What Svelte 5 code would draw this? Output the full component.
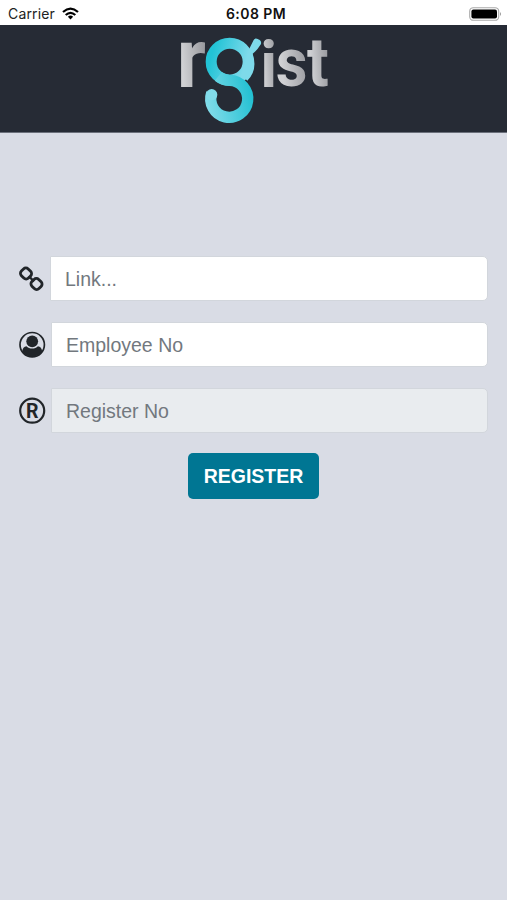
<script lang="ts">
	let link = '';
	let employeeNo = '';
	let registerNo = '';
</script>

<div class="screen">
	<div class="status">
		<div class="carrier">
			<span>Carrier</span>
			<svg width="17" height="13" viewBox="0 0 17 13">
				<g fill="none" stroke="#000" stroke-width="2.2">
					<path d="M1 5Q8.500-1.800 16 5" />
					<path d="M3.700 8Q8.500 3.600 13.300 8" />
				</g>
				<path d="M5.900 9.700Q8.500 7.500 11.100 9.700L8.500 12.400Z" />
			</svg>
		</div>
		<span class="time">6:08 PM</span>
		<svg class="battery" width="33" height="14" viewBox="0 0 33 14">
			<rect x="0.700" y="0.700" width="29" height="12.600" rx="3.600" fill="#fff" stroke="#aaa" stroke-width="1.100" />
			<rect x="2.400" y="2.400" width="25.600" height="9.200" rx="2" />
			<path d="M31 5Q33 7 31 9Z" fill="#999" />
		</svg>
	</div>

	<header>
		<svg class="logo" width="170" height="107" viewBox="0 0 510 321">
			<defs>
				<linearGradient id="silver" x1="0" x2="1" y1="0.3" y2="0">
					<stop offset="0.1" stop-color="#d0d1d4" />
					<stop offset="1" stop-color="#8f9095" />
				</linearGradient>
				<linearGradient id="ring" x1="0" x2="1" y1="0" y2="0.3">
					<stop offset="0.1" stop-color="#22c3d6" />
					<stop offset="1" stop-color="#7edaea" />
				</linearGradient>
				<linearGradient id="hook" gradientUnits="userSpaceOnUse" x1="105" x2="250" y1="225" y2="190">
					<stop offset="0" stop-color="#82dcea" />
					<stop offset="1" stop-color="#1fbfd1" />
				</linearGradient>
			</defs>
			<g fill="url(#silver)" class="letters">
				<text transform="translate(20 182) scale(0.950 1)" font-size="252">r</text>
				<text transform="translate(271 182) scale(0.980 1)" font-size="196">i</text>
				<text transform="translate(317 181) scale(0.900 1)" font-size="206">s</text>
				<text transform="translate(411 181) scale(0.930 1)" font-size="208">t</text>
			</g>
			<path
				d="M236 72L251 42Q254 36 261 38L268 41Q275 45 273 54Q261 74 248 83Q264 132 232 164L214 146Z"
				fill="#7edaea"
			/>
			<circle cx="179" cy="107" r="55.500" fill="none" stroke="url(#ring)" stroke-width="33" />
			<path
				d="M145 151Q160 163 179 163A55.500 55.500 0 1 1 125 201"
				fill="none"
				stroke="url(#hook)"
				stroke-width="34"
			/>
			<circle cx="125" cy="206" r="17" fill="#82dcea" />
		</svg>
	</header>

	<form on:submit|preventDefault>
		<label class="row">
			<svg width="26" height="26" viewBox="0 0 26 26">
				<g fill="none" stroke="#212529" stroke-width="2.800">
					<rect x="-5" y="-4.800" width="10" height="9.600" rx="3.300" transform="translate(7 7.500) rotate(45)" />
					<rect x="-5" y="-4.800" width="10" height="9.600" rx="3.300" transform="translate(17.500 18) rotate(45)" />
					<path d="M9.800 10.200L15 15.400" stroke-width="2.300" />
				</g>
			</svg>
			<input placeholder="Link..." bind:value={link} />
		</label>
		<label class="row">
			<svg width="27" height="27" viewBox="0 0 27 27">
				<circle cx="13.200" cy="13.700" r="12.200" fill="none" stroke="#212529" stroke-width="1.700" />
				<circle cx="13.200" cy="10.300" r="5.900" fill="#212529" />
				<path
					d="M3.200 20.700C3.400 17.300 5.100 15.200 7.500 15.200C10.200 18.300 16.200 18.300 18.900 15.200C21.300 15.200 23 17.300 23.200 20.700Q19.200 25.600 13.200 25.600T3.200 20.700Z"
					fill="#212529"
				/>
			</svg>
			<input placeholder="Employee No" bind:value={employeeNo} />
		</label>
		<label class="row">
			<svg width="27" height="27" viewBox="0 0 27 27">
				<circle cx="13.200" cy="13.700" r="12" fill="none" stroke="#212529" stroke-width="2.200" />
				<text class="mark" x="13.200" y="20.600" text-anchor="middle">R</text>
			</svg>
			<input placeholder="Register No" bind:value={registerNo} disabled />
		</label>
		<button type="submit">REGISTER</button>
	</form>
</div>

<style>
	:global(body) {
		margin: 0;
		background: #d9dce5;
	}

	.screen {
		min-height: 900px;
		background: #d9dce5;
		font-family: 'Liberation Sans', Arial, sans-serif;
	}

	.status {
		display: grid;
		grid-template-columns: 1fr auto 1fr;
		align-items: center;
		box-sizing: border-box;
		height: 25px;
		padding: 2px 5px 0 8px;
		background: #fff;
		font-family: Inter, sans-serif;
		font-size: 14px;
		color: #222;
	}

	.carrier {
		display: flex;
		align-items: center;
		gap: 7px;
		letter-spacing: 0.15px;
	}

	.time {
		padding-left: 2px;
		font-size: 14px;
		font-weight: 600;
		letter-spacing: 0.45px;
		color: #111;
	}

	.battery {
		justify-self: end;
	}

	header {
		display: flex;
		justify-content: center;
		box-sizing: border-box;
		height: 108px;
		padding-top: 1px;
		border-bottom: 1px solid #6b707b;
		background: #262b35;
	}

	.logo {
		display: block;
		margin-left: 3px;
		overflow: visible;
	}

	.letters {
		font-family: Roboto, sans-serif;
		font-weight: 700;
	}

	form {
		display: flex;
		flex-direction: column;
		gap: 21px;
		padding: 123px 19px 0;
	}

	.row {
		display: flex;
		align-items: center;
		gap: 5px;
	}

	.row svg {
		flex: none;
	}

	input {
		flex: 1;
		min-width: 0;
		box-sizing: border-box;
		height: 45px;
		padding: 2px 14px 0;
		border: 1px solid #d2d6dc;
		border-radius: 0 5px 5px 0;
		background: #fff;
		font-family: inherit;
		font-size: 19.5px;
		color: #495057;
	}

	input::placeholder {
		color: #72787e;
		opacity: 1;
	}

	input:disabled {
		background: #e9ecef;
	}

	.mark {
		font-family: Roboto, sans-serif;
		font-size: 19.5px;
		font-weight: 700;
		fill: #212529;
	}

	button {
		align-self: center;
		width: 131px;
		height: 46px;
		margin-top: -1px;
		padding: 1px 0 0;
		border: 0;
		border-radius: 5px;
		background: #007693;
		font-family: inherit;
		font-size: 19.5px;
		font-weight: 700;
		color: #fff;
	}
</style>
